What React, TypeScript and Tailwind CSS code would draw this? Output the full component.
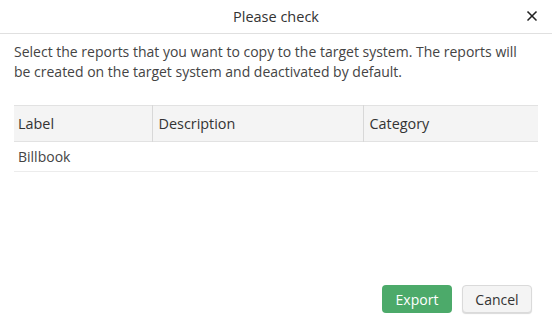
import React from "react";
import { X } from "lucide-react";

const rows = [{ label: "Billbook", description: "", category: "" }];

const App: React.FC = () => {
  return (
    <div className="w-[552px] h-[331px] bg-white flex flex-col text-[#333] font-['Open_Sans',sans-serif] text-[14px]">
      {/* Header */}
      <div className="h-[34px] border-b border-[#e0e0e0] flex items-center justify-center relative">
        <span className="text-[14.5px] text-[#333]">Please check</span>
        <button className="absolute right-[12px] top-[8px] text-[#222]">
          <X className="w-[16px] h-[16px]" strokeWidth={2.5} />
        </button>
      </div>

      {/* Content */}
      <div className="flex-1 flex flex-col px-[14px] pt-[8px]">
        <p className="max-w-[514px] leading-[20px] text-[#444]">
          Select the reports that you want to copy to the target system. The reports will be created on the target system and deactivated by default.
        </p>

        <table className="mt-[23px] w-[524px] border-collapse table-fixed">
          <thead>
            <tr className="bg-[#f4f4f4] h-[36px] border-y border-[#e2e2e2] text-left text-[14.4px]">
              <th className="w-[138px] font-normal px-[4px] border-r border-[#d8d8d8]">Label</th>
              <th className="w-[211px] font-normal px-[6px] border-r border-[#d8d8d8]">Description</th>
              <th className="font-normal px-[6px]">Category</th>
            </tr>
          </thead>
          <tbody>
            {rows.map((r) => (
              <tr key={r.label} className="h-[30px] border-b border-[#ececec] text-[#444]">
                <td className="px-[4px]">{r.label}</td>
                <td className="px-[6px]">{r.description}</td>
                <td className="px-[6px]">{r.category}</td>
              </tr>
            ))}
          </tbody>
        </table>

        {/* Footer */}
        <div className="mt-auto mb-[18px] flex justify-end gap-[10px] pr-[6px]">
          <button className="w-[70px] h-[28px] rounded-[4px] bg-[#4caa6a] text-white">Export</button>
          <button className="w-[70px] h-[28px] rounded-[4px] bg-[#f4f4f4] border border-[#dadada] shadow-[0_1px_1px_rgba(0,0,0,0.15)] text-[#333]">
            Cancel
          </button>
        </div>
      </div>
    </div>
  );
};

export default App;
